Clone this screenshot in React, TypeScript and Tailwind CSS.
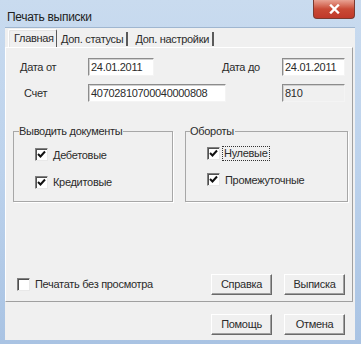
import React from 'react';

const font = "font-['Liberation_Sans',Arial,sans-serif] text-[11px] tracking-[-0.3px] text-[#2b2b2b]";

const Check = ({ checked }: { checked: boolean }) => (
  <span className="w-[13px] h-[13px] shrink-0 bg-white border-l border-t border-[#808080] border-r border-b border-r-[#e8e8e8] border-b-[#e8e8e8] shadow-[inset_1px_1px_0_#505050] flex items-center justify-center">
    {checked && (
      <svg width="9" height="9" viewBox="0 0 9 9">
        <path d="M1 4 L3.5 6.5 L8 1.5" fill="none" stroke="#111" strokeWidth="2" />
      </svg>
    )}
  </span>
);

const Field = ({ value, w, gray }: { value: string; w: string; gray?: boolean }) => (
  <div
    className={`${w} h-[18px] flex items-center pl-[2px] border border-[#8c8c8c] border-r-[#f4f4f4] border-b-[#f4f4f4] shadow-[inset_1px_1px_0_#d0d0d0] ${gray ? 'bg-[#f0f0f0]' : 'bg-white'}`}
  >
    {value}
  </div>
);

const Btn = ({ label }: { label: string }) => (
  <button className="w-[61px] h-[21px] bg-[#f0f0f0] border border-white border-r-[#6a6a6a] border-b-[#6a6a6a] shadow-[inset_-1px_-1px_0_#a0a0a0] flex items-center justify-center">
    {label}
  </button>
);

export default function App() {
  return (
    <div className={`${font} w-[361px] h-[344px] bg-gradient-to-b from-[#c9dbef] via-[#bcd2ec] to-[#a9c3e3] flex flex-col overflow-hidden`}>
      {/* title bar */}
      <div className="h-[27px] flex items-start shrink-0">
        <span className="pl-[7px] pt-[8px] text-[12px] text-[#222]">Печать выписки</span>
        <div className="ml-auto mr-[6px] w-[42px] h-[19px] rounded-b-[4px] border border-t-0 border-[#7b3a30] bg-gradient-to-b from-[#e8a293] via-[#c94a36] to-[#c0392b] flex items-center justify-center">
          <svg width="11" height="10" viewBox="0 0 11 10">
            <path d="M2 1.5 L9 8.5 M9 1.5 L2 8.5" stroke="#fff" strokeWidth="2.4" strokeLinecap="square" />
          </svg>
        </div>
      </div>

      {/* client */}
      <div className="ml-[5px] mr-[6px] h-[313px] bg-[#f0f0f0] flex flex-col border-t border-[#9fb6d0]">
        {/* tabs */}
        <div className="flex items-end h-[19px] pl-[3px] pt-[1px]">
          <div className="h-[18px] w-[49px] border-l border-t border-white border-r border-r-[#5a5a5a] shadow-[inset_1px_1px_0_#e4e4e4] flex items-center pl-[5px] rounded-t-[2px]">
            Главная
          </div>
          <div className="h-[14px] flex items-center pl-[4px] pr-[3px] border-r-2 border-[#5a5a5a] mb-[1px]">Доп. статусы</div>
          <div className="h-[14px] flex items-center pl-[7px] pr-[3px] border-r-2 border-[#5a5a5a] mb-[1px]">Доп. настройки</div>
        </div>

        {/* tab page */}
        <div className="h-[255px] mr-[2px] border-l border-t border-white border-r border-b border-r-[#a0a0a0] border-b-[#a0a0a0] flex flex-col">
          <div className="flex items-center mt-[10px]">
            <span className="w-[82px] pl-[14px]">Дата от</span>
            <Field value="24.01.2011" w="w-[66px]" />
            <span className="ml-[68px] w-[60px]">Дата до</span>
            <Field value="24.01.2011" w="w-[63px]" />
          </div>
          <div className="flex items-center mt-[8px]">
            <span className="w-[82px] pl-[18px]">Счет</span>
            <Field value="40702810700040000808" w="w-[138px]" />
            <span className="w-[56px]" />
            <Field value="810" w="w-[63px]" gray />
          </div>

          <div className="flex mt-[21px] pl-[7px] gap-[12px]">
            <fieldset className="w-[160px] h-[79px] border border-[#a7a7a7] shadow-[1px_1px_0_#fff]">
              <legend className="ml-[5px] pr-[1px]">Выводить документы</legend>
              <div className="flex flex-col pl-[21px] pt-[7px] gap-[11px]">
                <div className="flex items-center gap-[5px]"><Check checked />Дебетовые</div>
                <div className="flex items-center gap-[5px]"><Check checked />Кредитовые</div>
              </div>
            </fieldset>
            <fieldset className="w-[163px] h-[79px] border border-[#a7a7a7] shadow-[1px_1px_0_#fff]">
              <legend className="ml-[4px] pr-[1px]">Обороты</legend>
              <div className="flex flex-col pl-[21px] pt-[7px] gap-[12px]">
                <div className="flex items-center gap-[3px]">
                  <Check checked />
                  <span className="outline outline-1 outline-dotted outline-[#333] px-[1px] leading-[13px]">Нулевые</span>
                </div>
                <div className="flex items-center gap-[5px]"><Check checked />Промежуточные</div>
              </div>
            </fieldset>
          </div>

          <div className="flex items-center mt-auto mb-[6px] pl-[11px]">
            <Check checked={false} />
            <span className="ml-[5px]">Печатать без просмотра</span>
            <div className="ml-auto flex gap-[12px] mr-[7px]">
              <Btn label="Справка" />
              <Btn label="Выписка" />
            </div>
          </div>
        </div>

        <div className="flex justify-end gap-[12px] mt-[12px] mr-[10px]">
          <Btn label="Помощь" />
          <Btn label="Отмена" />
        </div>
      </div>
    </div>
  );
}
